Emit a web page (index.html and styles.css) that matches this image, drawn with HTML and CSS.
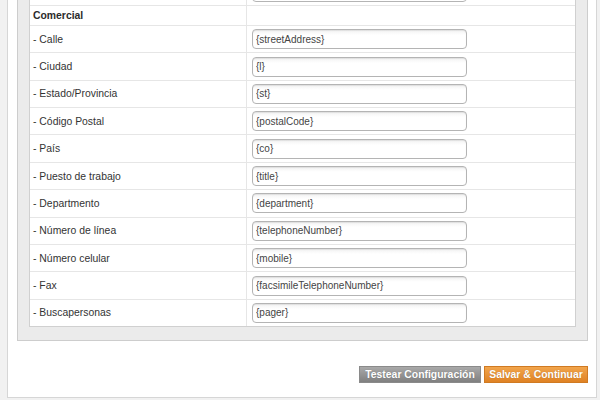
FILE: index.html
```html
<!DOCTYPE html>
<html lang="es">
<head>
<meta charset="utf-8">
<title>Configuración LDAP</title>
<link rel="stylesheet" href="styles.css">
</head>
<body>
<div class="panel">
  <div class="fieldset">
    <div class="grid">
      <table class="form">
        <tr><td class="label"></td><td class="value"><input class="field" type="text" value=""></td></tr>
        <tr class="section"><td class="label head">Comercial</td><td class="value"></td></tr>
        <tr><td class="label">- Calle</td><td class="value"><input class="field" type="text" value="{streetAddress}"></td></tr>
        <tr><td class="label">- Ciudad</td><td class="value"><input class="field" type="text" value="{l}"></td></tr>
        <tr><td class="label">- Estado/Provincia</td><td class="value"><input class="field" type="text" value="{st}"></td></tr>
        <tr><td class="label">- Código Postal</td><td class="value"><input class="field" type="text" value="{postalCode}"></td></tr>
        <tr><td class="label">- País</td><td class="value"><input class="field" type="text" value="{co}"></td></tr>
        <tr><td class="label">- Puesto de trabajo</td><td class="value"><input class="field" type="text" value="{title}"></td></tr>
        <tr><td class="label">- Departmento</td><td class="value"><input class="field" type="text" value="{department}"></td></tr>
        <tr><td class="label">- Número de línea</td><td class="value"><input class="field" type="text" value="{telephoneNumber}"></td></tr>
        <tr><td class="label">- Número celular</td><td class="value"><input class="field" type="text" value="{mobile}"></td></tr>
        <tr><td class="label">- Fax</td><td class="value"><input class="field" type="text" value="{facsimileTelephoneNumber}"></td></tr>
        <tr class="last"><td class="label">- Buscapersonas</td><td class="value"><input class="field" type="text" value="{pager}"></td></tr>
      </table>
    </div>
  </div>
  <div class="actions">
    <button class="btn btn-grey" type="button">Testear Configuración</button>
    <button class="btn btn-orange" type="button">Salvar &amp; Continuar</button>
  </div>
</div>
</body>
</html>
```
FILE: styles.css
```css
html {
  overflow: hidden;
}
body {
  margin: 0;
  background: #f1f1f1;
  font-family: "Liberation Sans", Arial, sans-serif;
  color: #333;
}
.panel {
  margin: -35.4px 3px 0 7px;
  background: #fff;
  border: 1px solid #d6d6d6;
  padding: 0 8px 14px 9px;
}
.fieldset {
  background: #ebebeb;
  border: 1px solid #cdcdcd;
  padding: 11px 11px 13px 11px;
}
.grid {
  background: #fff;
  border: 1px solid #d0d0d0;
}
.form {
  width: 100%;
  border-collapse: separate;
  border-spacing: 0;
  table-layout: fixed;
}
.form td {
  border-bottom: 1px solid #e6e6e6;
  padding: 3.2px 0;
  vertical-align: middle;
}
.form tr.last td {
  border-bottom: 0;
}
.form td.label {
  width: 213px;
  padding-left: 3px;
  border-right: 1px solid #e6e6e6;
  font-size: 10.4px;
  color: #333;
  white-space: nowrap;
}
.form td.value {
  padding-left: 5px;
}
.form tr.section td {
  height: 19px;
  padding: 0 0 0 3px;
}
.form tr.section td.value {
  padding-left: 5px;
}
.form td.head {
  font-weight: bold;
  color: #2b2b2b;
}
.field {
  display: block;
  box-sizing: border-box;
  width: 215px;
  height: 20px;
  margin: 0;
  padding: 0 3px;
  border: 1px solid #b4b4b4;
  border-radius: 4px;
  background: linear-gradient(#f2f2f2, #fff 5px);
  box-shadow: inset 0 1px 1px rgba(0, 0, 0, 0.08);
  font-family: "Liberation Sans", Arial, sans-serif;
  font-size: 10px;
  color: #444;
}
.actions {
  display: flex;
  justify-content: flex-end;
  gap: 3px;
  margin-top: 25px;
}
.btn {
  box-sizing: border-box;
  height: 17px;
  margin: 0;
  padding: 0 4px;
  font-family: "Liberation Sans", Arial, sans-serif;
  font-size: 10.4px;
  font-weight: bold;
  color: #fff;
  line-height: 15px;
  white-space: nowrap;
  border-radius: 0;
  text-shadow: 0 0 1px rgba(0, 0, 0, 0.25);
}
.btn-grey {
  min-width: 122px;
  background: linear-gradient(#a9a9a9, #808080);
  border: 1px solid #8a8a8a;
}
.btn-orange {
  min-width: 104px;
  background: linear-gradient(#f2a54c, #df8224);
  border: 1px solid #d07a22;
}
```
